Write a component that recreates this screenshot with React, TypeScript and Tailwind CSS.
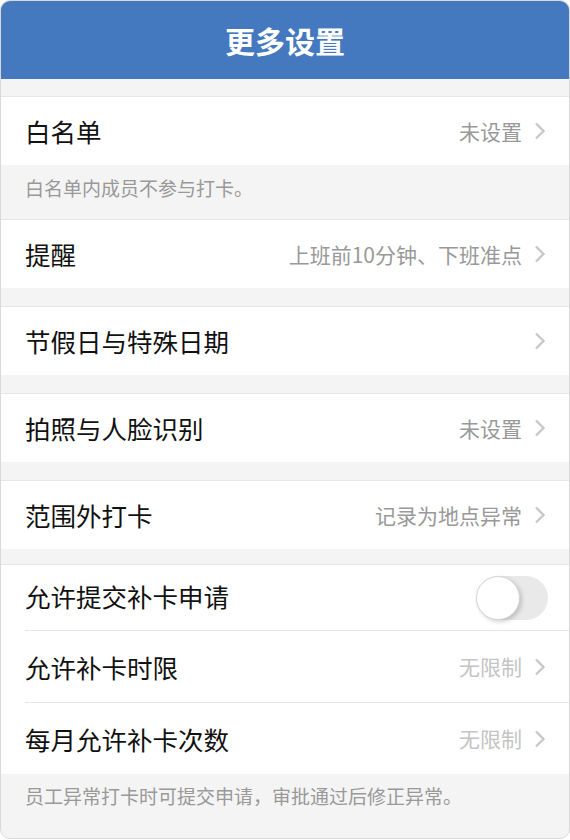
import React from "react";

const FONT = { fontFamily: '"Noto Sans CJK SC", "Noto Sans", sans-serif' };

function Chevron() {
  return (
    <svg width="12" height="18" viewBox="0 0 12 18" className="ml-[12px] shrink-0">
      <path d="M2 1.5 L9.5 9 L2 16.5" fill="none" stroke="#c7c7cc" strokeWidth="2.4" />
    </svg>
  );
}

function Row({ label, value, light, h = "h-[68px]" }: { label: string; value?: string; light?: boolean; h?: string }) {
  return (
    <div className={`flex items-center justify-between pl-[24px] pr-[23px] bg-white ${h}`}>
      <span className="text-[25.5px] text-[#111] leading-none">{label}</span>
      <div className="flex items-center">
        {value && (
          <span className={`text-[21px] leading-none ${light ? "text-[#c4c4c4]" : "text-[#999]"}`}>{value}</span>
        )}
        <Chevron />
      </div>
    </div>
  );
}

function Group({ children }: { children: React.ReactNode }) {
  return <div className="border-t border-[#e6e6e6] bg-white">{children}</div>;
}

export default function App() {
  return (
    <div style={FONT} className="w-[570px] h-[839px] bg-[#f4f4f4] rounded-[10px] border border-[#d9d9d9] overflow-hidden flex flex-col">
      <div className="h-[78px] shrink-0 bg-[#4478bf] flex items-center justify-center">
        <span className="text-white text-[30px] font-bold leading-none">更多设置</span>
      </div>
      <div className="h-[17px] shrink-0" />
      <Group>
        <Row label="白名单" value="未设置" />
      </Group>
      <div className="h-[54px] shrink-0 pl-[24px] pt-[11px] text-[19px] leading-[24px] text-[#999]">白名单内成员不参与打卡。</div>
      <Group>
        <Row label="提醒" value="上班前10分钟、下班准点" />
      </Group>
      <div className="h-[18px] shrink-0" />
      <Group>
        <Row label="节假日与特殊日期" />
      </Group>
      <div className="h-[18px] shrink-0" />
      <Group>
        <Row label="拍照与人脸识别" value="未设置" />
      </Group>
      <div className="h-[18px] shrink-0" />
      <Group>
        <Row label="范围外打卡" value="记录为地点异常" />
      </Group>
      <div className="h-[15px] shrink-0" />
      <Group>
        <div className="flex items-center justify-between pl-[24px] pr-[21px] h-[65px] bg-white">
          <span className="text-[25.5px] text-[#111] leading-none -mt-[4px]">允许提交补卡申请</span>
          <div className="relative w-[72px] h-[44px] rounded-full bg-[#e9e9e9]">
            <div className="absolute left-0 top-0 w-[44px] h-[44px] rounded-full bg-white border border-[#d6d6d6] shadow-[2px_2px_4px_rgba(0,0,0,0.18)]" />
          </div>
        </div>
        <div className="ml-[24px] border-t border-[#e6e6e6]" />
        <Row label="允许补卡时限" value="无限制" light h="h-[71px]" />
        <div className="ml-[24px] border-t border-[#e6e6e6]" />
        <Row label="每月允许补卡次数" value="无限制" light h="h-[71px]" />
      </Group>
      <div className="pl-[24px] pt-[10px] text-[19px] leading-[24px] text-[#999]">员工异常打卡时可提交申请，审批通过后修正异常。</div>
    </div>
  );
}
